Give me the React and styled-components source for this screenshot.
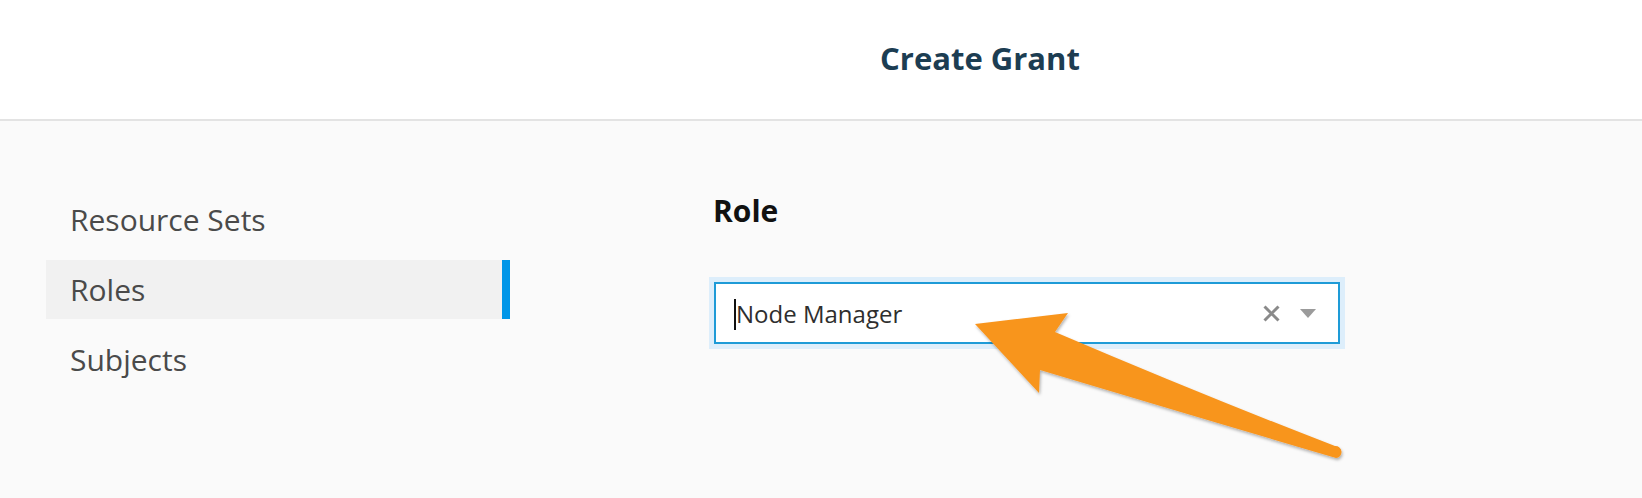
import React from 'react';
import styled, { createGlobalStyle } from 'styled-components';

const GlobalStyle = createGlobalStyle`
	html, body {
		margin: 0;
		padding: 0;
		background: #fafafa;
	}
	body {
		font-family: 'Open Sans', 'Noto Sans', sans-serif;
	}
`;

const Page = styled.div`
	position: relative;
	min-height: 100vh;
	display: flex;
	flex-direction: column;
	overflow: hidden;
`;

const Header = styled.header`
	height: 119px;
	box-sizing: content-box;
	background: #ffffff;
	border-bottom: 2px solid #e3e3e3;
	display: flex;
	justify-content: center;
	align-items: flex-start;
	padding-left: 318px;
`;

const Title = styled.h1`
	margin: 37px 0 0;
	font-size: 31px;
	font-weight: 700;
	color: #1c3d52;
`;

const Body = styled.div`
	flex: 1;
	display: flex;
	background: #fafafa;
`;

const Sidebar = styled.nav`
	margin-left: 46px;
	width: 464px;
	padding-top: 69px;
	display: flex;
	flex-direction: column;
	gap: 11px;
`;

const NavItem = styled.div`
	height: 59px;
	display: flex;
	align-items: center;
	padding-left: 24px;
	box-sizing: border-box;
	font-size: 30px;
	color: #4a4a4a;
	background: ${(p) => (p.active ? '#f1f1f1' : 'transparent')};
	border-right: 8px solid ${(p) => (p.active ? '#0096e8' : 'transparent')};
`;

const Content = styled.section`
	margin-left: 203px;
	padding-top: 69px;
	display: flex;
	flex-direction: column;
`;

const Label = styled.h2`
	margin: 0;
	font-size: 30px;
	font-weight: 700;
	color: #111;
	line-height: normal;
`;

const Select = styled.div`
	margin-top: 51px;
	margin-left: 1px;
	width: 626px;
	height: 62px;
	box-sizing: border-box;
	border: 2px solid #1e9bd7;
	box-shadow: 0 0 0 5px #ddeefb;
	background: #fff;
	display: flex;
	align-items: center;
	padding: 0 22px 0 18px;
`;

const Cursor = styled.span`
	display: inline-block;
	width: 2px;
	height: 31px;
	background: #111;
	margin-top: 2px;
`;

const Value = styled.span`
	flex: 1;
	font-size: 24px;
	color: #2e2e2e;
`;

const Controls = styled.div`
	display: flex;
	align-items: center;
	gap: 20px;
`;

const Overlay = styled.svg`
	position: absolute;
	left: 0;
	top: 0;
	pointer-events: none;
`;

const navItems = ['Resource Sets', 'Roles', 'Subjects'];

export default function App() {
	return (
		<Page>
			<GlobalStyle />
			<Header>
				<Title>Create Grant</Title>
			</Header>
			<Body>
				<Sidebar>
					{navItems.map((item) => (
						<NavItem key={item} active={item === 'Roles'}>
							{item}
						</NavItem>
					))}
				</Sidebar>
				<Content>
					<Label>Role</Label>
					<Select>
						<Cursor />
						<Value>Node Manager</Value>
						<Controls>
							<svg width="17" height="17" viewBox="0 0 17 17">
								<path d="M1.5 1.5 L15.5 15.5 M15.5 1.5 L1.5 15.5" stroke="#8a8a8a" strokeWidth="3" />
							</svg>
							<svg width="16" height="9" viewBox="0 0 16 9">
								<path d="M0 0 H16 L8 9 Z" fill="#9b9b9b" />
							</svg>
						</Controls>
					</Select>
				</Content>
			</Body>
			<Overlay width="1642" height="498" viewBox="0 0 1642 498">
				<defs>
					<filter id="shadow" x="-10%" y="-10%" width="120%" height="130%">
						<feDropShadow dx="1" dy="2" stdDeviation="1.5" floodColor="#000" floodOpacity="0.3" />
					</filter>
				</defs>
				<path
					d="M975 324 L1068 313 L1055 332 Q1200 394 1335 446 A6 6 0 0 1 1336 458 Q1180 412 1040 370 L1039 393 Z"
					fill="#f8951f"
					filter="url(#shadow)"
				/>
			</Overlay>
		</Page>
	);
}
